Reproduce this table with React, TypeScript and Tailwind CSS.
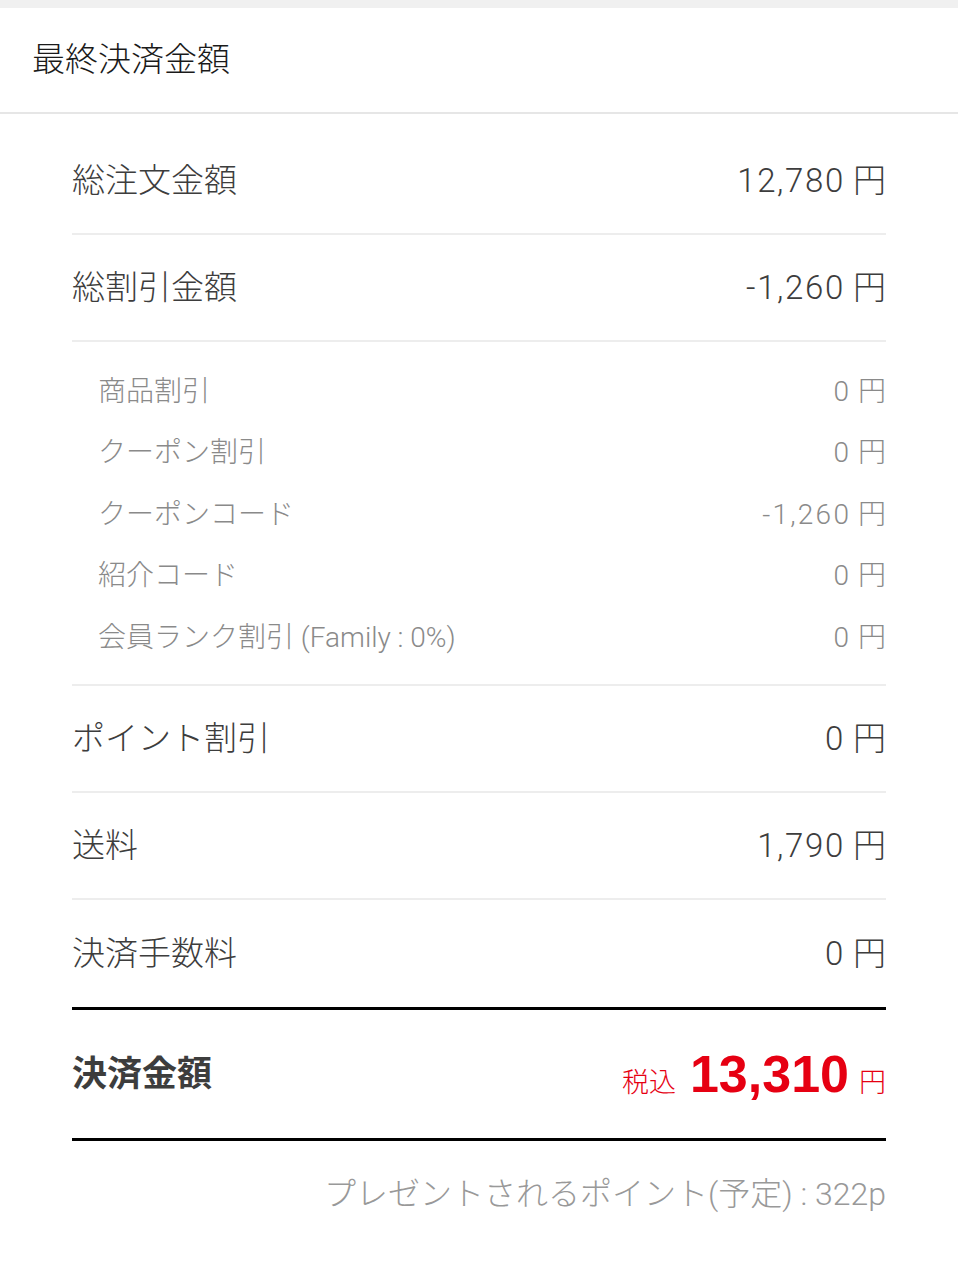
import React from 'react';

const font = { fontFamily: 'Roboto, "Noto Sans CJK JP", "Noto Sans", sans-serif' };

type Row = { label: string; value: string };

const topRows: Row[] = [
    { label: '総注文金額', value: '12,780' },
    { label: '総割引金額', value: '-1,260' },
];

const discountRows: Row[] = [
    { label: '商品割引', value: '0' },
    { label: 'クーポン割引', value: '0' },
    { label: 'クーポンコード', value: '-1,260' },
    { label: '紹介コード', value: '0' },
    { label: '会員ランク割引 (Family : 0%)', value: '0' },
];

const bottomRows: Row[] = [
    { label: 'ポイント割引', value: '0' },
    { label: '送料', value: '1,790' },
    { label: '決済手数料', value: '0' },
];

const MainRow: React.FC<{ row: Row; last?: boolean }> = ({ row, last }) => (
    <div className={`flex h-[107px] items-center justify-between pt-[1px] text-[33px] font-light text-[#3d3d3d] ${last ? '' : 'border-b-2 border-[#ededed]'}`}>
        <span>{row.label}</span>
        <span>
            <span className="tracking-[0.05em]">{row.value}</span> 円
        </span>
    </div>
);

const App: React.FC = () => {
    return (
        <div className="min-h-[1280px] w-[958px] bg-white" style={font}>
            <div className="h-2 bg-[#f0f0f0]" />
            <div className="flex h-[106px] items-center border-b-2 border-[#e6e6e6] pl-8">
                <h2 className="text-[33px] font-light text-[#1a1a1a]">最終決済金額</h2>
            </div>

            <div className="px-[72px] pt-[14px]">
                {topRows.map(r => <MainRow key={r.label} row={r} />)}

                <div className="border-b-2 border-[#ededed] pb-[15px] pt-[19px]">
                    {discountRows.map(r => (
                        <div key={r.label} className="flex h-[61.5px] items-center justify-between pl-[26px] text-[28px] font-light text-[#8a8a8a]">
                            <span>{r.label}</span>
                            <span>
                                <span className="tracking-[0.08em]">{r.value}</span> 円
                            </span>
                        </div>
                    ))}
                </div>

                {bottomRows.map((r, i) => <MainRow key={r.label} row={r} last={i === bottomRows.length - 1} />)}

                <div className="flex h-[134px] items-center justify-between border-y-[3px] border-black pt-[4px]">
                    <span className="text-[35px] font-bold text-[#3d3d3d]">決済金額</span>
                    <span className="flex items-baseline text-[#e60012]">
                        <span className="mr-[14px] text-[27px] font-light">税込</span>
                        <span className="text-[52px] font-bold leading-none" style={{ fontFamily: '"Liberation Sans", Arial, sans-serif' }}>13,310</span>
                        <span className="ml-[10px] text-[27px] font-light">円</span>
                    </span>
                </div>

                <div className="flex h-[104px] items-center justify-end pt-[2px]">
                    <span className="text-[32px] font-light text-[#999999]">プレゼントされるポイント(予定) : 322p</span>
                </div>
            </div>
        </div>
    );
};

export default App;
